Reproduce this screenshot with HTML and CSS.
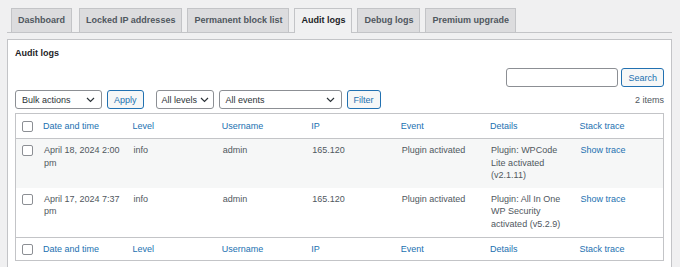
FILE: index.html
```html
<!DOCTYPE html>
<html lang="en">
<head>
    <meta charset="UTF-8">
    <meta name="viewport" content="width=device-width, initial-scale=1.0">
    <title>Audit logs</title>
    <link rel="stylesheet" href="styles.css">
</head>
<body>
    <div class="wrap">
        <!-- Tabs -->
        <nav class="nav-tabs">
            <a href="#" class="nav-tab">Dashboard</a>
            <a href="#" class="nav-tab">Locked IP addresses</a>
            <a href="#" class="nav-tab">Permanent block list</a>
            <a href="#" class="nav-tab active">Audit logs</a>
            <a href="#" class="nav-tab">Debug logs</a>
            <a href="#" class="nav-tab">Premium upgrade</a>
        </nav>

        <div class="panel">
            <h2 class="panel-title">Audit logs</h2>

            <div class="search-box">
                <input type="text" class="search-input">
                <button class="btn">Search</button>
            </div>

            <div class="tablenav">
                <div class="select select-bulk">
                    <span>Bulk actions</span>
                    <svg width="9" height="6" viewBox="0 0 9 6"><path d="M1 1 L4.5 4.5 L8 1" fill="none" stroke="#2c3338" stroke-width="1.2"/></svg>
                </div>
                <button class="btn">Apply</button>
                <div class="select select-levels">
                    <span>All levels</span>
                    <svg width="9" height="6" viewBox="0 0 9 6"><path d="M1 1 L4.5 4.5 L8 1" fill="none" stroke="#2c3338" stroke-width="1.2"/></svg>
                </div>
                <div class="select select-events">
                    <span>All events</span>
                    <svg width="9" height="6" viewBox="0 0 9 6"><path d="M1 1 L4.5 4.5 L8 1" fill="none" stroke="#2c3338" stroke-width="1.2"/></svg>
                </div>
                <button class="btn">Filter</button>
                <span class="items-count">2 items</span>
            </div>

            <table class="log-table">
                <colgroup>
                    <col class="col-check">
                    <col><col><col><col><col><col><col>
                </colgroup>
                <thead>
                    <tr>
                        <th class="check"><span class="checkbox"></span></th>
                        <th><a href="#">Date and time</a></th>
                        <th><a href="#">Level</a></th>
                        <th><a href="#">Username</a></th>
                        <th><a href="#">IP</a></th>
                        <th><a href="#">Event</a></th>
                        <th><a href="#">Details</a></th>
                        <th><a href="#">Stack trace</a></th>
                    </tr>
                </thead>
                <tbody>
                    <tr class="striped">
                        <td class="check"><span class="checkbox"></span></td>
                        <td>April 18, 2024 2:00 pm</td>
                        <td>info</td>
                        <td>admin</td>
                        <td>165.120</td>
                        <td>Plugin activated</td>
                        <td>Plugin: WPCode Lite activated (v2.1.11)</td>
                        <td><a href="#">Show trace</a></td>
                    </tr>
                    <tr>
                        <td class="check"><span class="checkbox"></span></td>
                        <td>April 17, 2024 7:37 pm</td>
                        <td>info</td>
                        <td>admin</td>
                        <td>165.120</td>
                        <td>Plugin activated</td>
                        <td>Plugin: All In One WP Security activated (v5.2.9)</td>
                        <td><a href="#">Show trace</a></td>
                    </tr>
                </tbody>
                <tfoot>
                    <tr>
                        <th class="check"><span class="checkbox"></span></th>
                        <th><a href="#">Date and time</a></th>
                        <th><a href="#">Level</a></th>
                        <th><a href="#">Username</a></th>
                        <th><a href="#">IP</a></th>
                        <th><a href="#">Event</a></th>
                        <th><a href="#">Details</a></th>
                        <th><a href="#">Stack trace</a></th>
                    </tr>
                </tfoot>
            </table>
        </div>
    </div>
</body>
</html>
```

FILE: styles.css
```css
/* WordPress admin look */
body {
    margin: 0;
    padding: 0;
    font-family: "Liberation Sans", Arial, sans-serif;
    font-size: 9px;
    background-color: #f0f0f1;
    color: #50575e;
}

a {
    color: #2271b1;
    text-decoration: none;
}

.wrap {
    padding: 8px 8px 0 7px;
}

/* Tabs */
.nav-tabs {
    display: flex;
    gap: 5px;
    padding-left: 4px;
    border-bottom: 1px solid #c3c4c7;
}

.nav-tab {
    display: block;
    height: 23px;
    line-height: 23px;
    padding: 0 6px;
    margin-bottom: -1px;
    border: 1px solid #c3c4c7;
    border-bottom: none;
    background-color: #dcdcde;
    color: #50575e;
    font-weight: bold;
}

.nav-tab:first-child {
    margin-right: 2px;
}

.nav-tab.active {
    background-color: #f0f0f1;
    color: #1d2327;
    height: 24px;
}

/* Panel */
.panel {
    margin-top: 6px;
    background-color: #fff;
    border: 1px solid #c3c4c7;
    padding: 7px 7px 20px;
}

.panel-title {
    margin: 0;
    font-size: 9px;
    line-height: 13px;
    color: #1d2327;
}

.search-box {
    display: flex;
    justify-content: flex-end;
    gap: 3px;
    margin-top: 8px;
}

.search-input {
    width: 112px;
    height: 19px;
    box-sizing: border-box;
    border: 1px solid #8c8f94;
    border-radius: 3px;
    margin: 0;
}

.btn {
    height: 19px;
    box-sizing: border-box;
    padding: 0 6px;
    margin: 0;
    border: 1px solid #2271b1;
    border-radius: 3px;
    background-color: #f6f7f7;
    color: #2271b1;
    font-family: inherit;
    font-size: 9px;
}

.tablenav {
    display: flex;
    align-items: center;
    margin-top: 3px;
}

.select {
    display: flex;
    align-items: center;
    justify-content: space-between;
    height: 19px;
    box-sizing: border-box;
    padding: 0 6px;
    border: 1px solid #8c8f94;
    border-radius: 3px;
    color: #2c3338;
    margin-right: 5px;
}

.select-bulk {
    width: 87px;
}

.select-levels {
    width: 58px;
    padding-left: 5px;
    padding-right: 4px;
}

.select-events {
    width: 123px;
}

.tablenav .btn:nth-child(2) {
    margin-right: 12px;
}

.items-count {
    margin-left: auto;
}

/* Table */
.log-table {
    width: 100%;
    margin-top: 4px;
    table-layout: fixed;
    border-collapse: separate;
    border-spacing: 0;
    border: 1px solid #c3c4c7;
}

.col-check {
    width: 21px;
}

.log-table th {
    text-align: left;
    font-weight: normal;
    padding: 6px 6px;
    line-height: 12.3px;
}

.log-table thead th {
    border-bottom: 1px solid #c3c4c7;
}

.log-table tfoot th {
    border-top: 1px solid #c3c4c7;
    padding: 5px 6px;
}

.log-table td {
    vertical-align: top;
    padding: 5px 5px 7px 7px;
    line-height: 12.3px;
}

.log-table .check {
    padding-left: 6px;
    padding-right: 0;
}

.striped td {
    background-color: #f6f7f7;
}

.checkbox {
    display: block;
    width: 11px;
    height: 11px;
    box-sizing: border-box;
    border: 1px solid #8c8f94;
    border-radius: 2px;
    background-color: #fff;
}

td .checkbox {
    margin-top: 1px;
}
```
